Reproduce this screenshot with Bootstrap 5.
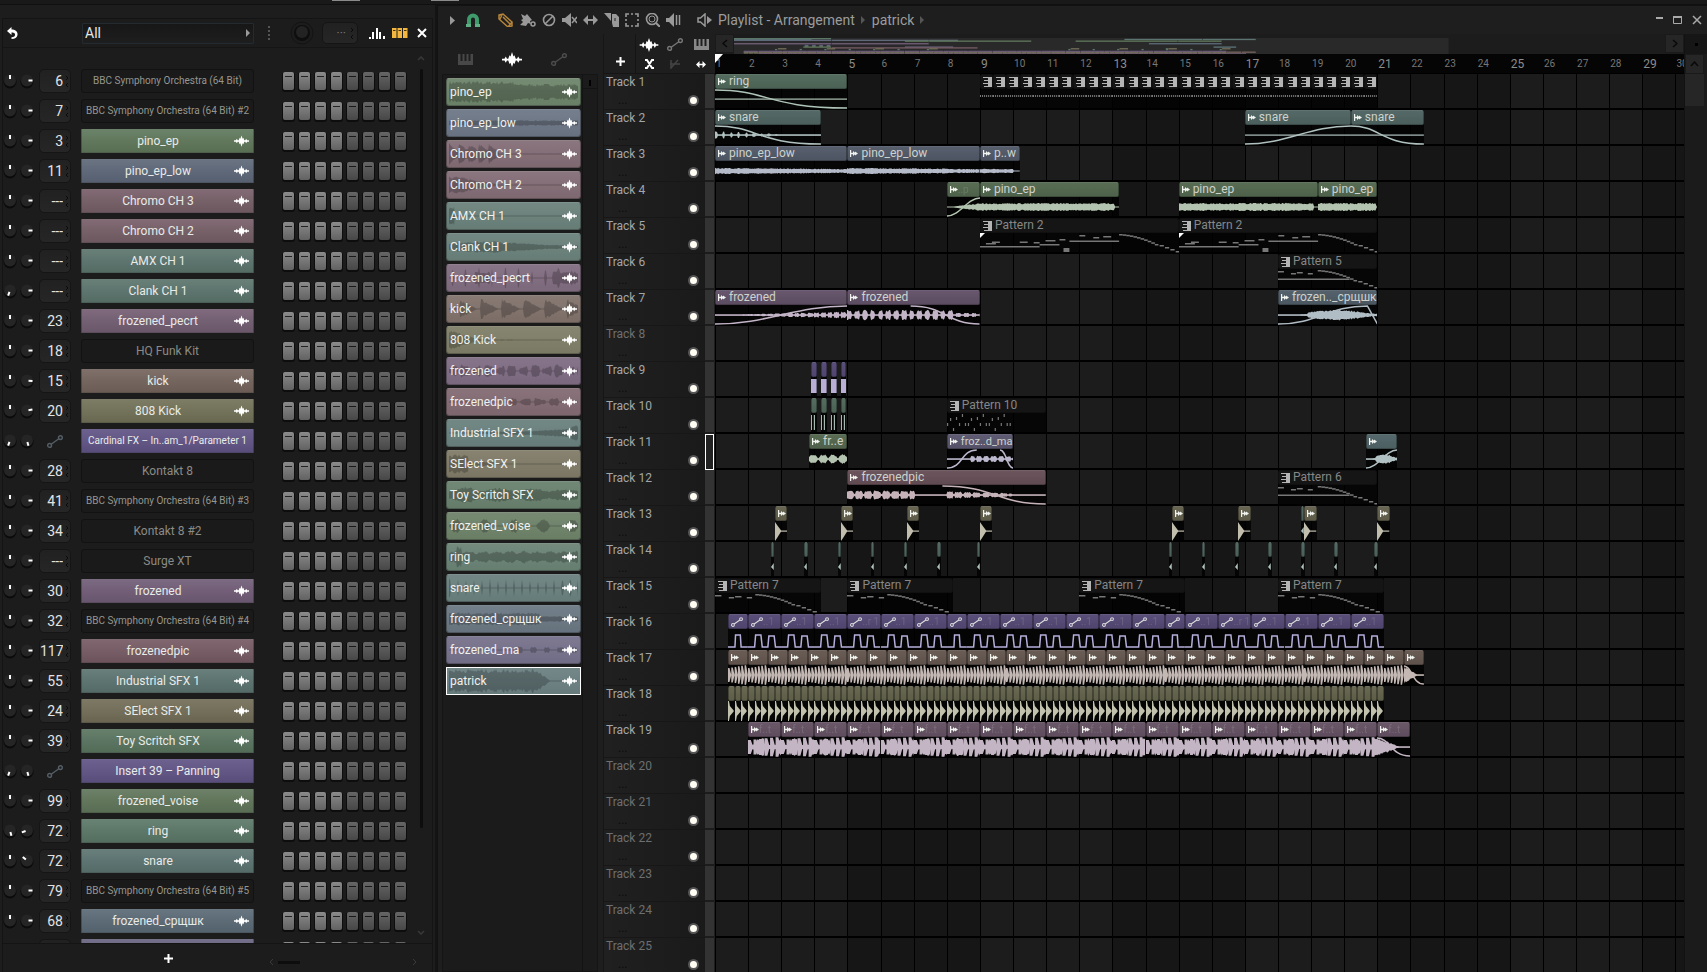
<!DOCTYPE html>
<html lang="en" data-bs-theme="dark">
<head>
<meta charset="utf-8">
<meta name="viewport" content="width=device-width, initial-scale=1">
<title>Playlist - Arrangement</title>
<link href="https://cdn.jsdelivr.net/npm/bootstrap@5.3.0/dist/css/bootstrap.min.css" rel="stylesheet">
<style>
:root{--ui:Roboto,"Noto Sans",sans-serif;--ink:#a3a6a8}
body{font-family:var(--ui);font-size:12px;line-height:16px;background:#1d1d1d;color:var(--ink)}
svg{display:block;flex:none}
button{background:none;border:0;padding:0;color:inherit;display:block;flex:none}
.topstrip{height:5px;background:#191919;border-bottom:1px solid #101010}
.topstrip i{height:1px;width:28px;background:#8a8a8a}
/* channel rack */
.rackwin{width:437px;border-right:2px solid #141414}
.rackin{margin:13px 2px 0 2px;border:1px solid #141414;border-width:1px 1px 0;background:#1c1c1c}
.rackhead{height:29px;border-bottom:1px solid #151515}
.filter{width:172px;height:21px;border:1px solid #232a30;background:linear-gradient(#171717,#1e1e1e);color:#e6e6e6;appearance:none;padding:0 2px;font-size:14px;line-height:17px;border-radius:1px}
.racklist{padding-top:18px}
.chrow{height:30px}
.knob{width:14px;height:16px}
.numbox{width:32px;height:24px;border:1px solid #151515;border-radius:5px;background:linear-gradient(#212121,#262626)}
.numbox input{width:25px;background:none;border:0;outline:0;color:#e3e3e3;font-size:14px;line-height:20px;padding:0 2px 0 0;text-align:right}
.chname{width:173px;height:24px;border-radius:1px;color:#e9ebe8;text-align:center;border:1px solid rgba(0,0,0,.25);border-top-color:rgba(255,255,255,.13);background-image:linear-gradient(rgba(255,255,255,.07),rgba(0,0,0,.08))}
.chname.plain{background:#1a1a1a;color:#8b8b86;border-color:#121212;border-radius:3px}
.chname.longer{font-size:10px}
.chname.longer.plain{color:#96968f}
.sw{width:11px;height:18px;border-radius:2px;background:linear-gradient(#222,#222) 50% 4px/7px 1px no-repeat,linear-gradient(#8b8b8b,#626262);box-shadow:0 1px 0 1px #0d0d0d}
.sw.off{background:linear-gradient(#181818,#181818) 50% 4px/7px 1px no-repeat,linear-gradient(#666,#474747)}
.thumb{width:3px;background:#0d0d0d;border-radius:2px}
.rackfoot{height:29px;border-top:1px solid #141414}
/* playlist window */
.plwin{border:1px solid #121212;border-width:1px 0 0 1px;background:#1e1e1e}
.titlebar{height:28px}
.titlebar .crumb{font-size:14px;line-height:20px;color:#9a9c9d}
.picker{width:165px}
.pickbox{border:1px solid #151515;background:#1b1b1b}
.picklist{width:141px}
.pick{width:135px;height:28px;border-radius:3px;border:1px solid rgba(0,0,0,.3);border-top-color:rgba(255,255,255,.16);color:#f1f1ee;text-align:left;background-image:linear-gradient(rgba(255,255,255,.06),rgba(0,0,0,.04));overflow:hidden}
.pick.sel{border:1px solid #fff;border-radius:0}
.pick .wv{position:absolute;inset:0}
.pickscroll{width:15px;background:#1b1b1b;border-left:1px solid #131313}
.heads{width:112px;border-left:1px solid #161616}
.tools{height:40px;border-bottom:1px solid #151515}
.thead-row{height:36px}
.thead-main{width:101px;background:linear-gradient(90deg,#202020,#1a1a1a);border-bottom:1px solid #171717}
.thead-row .strip{width:9px;background:#333;border-bottom:2px solid #1c1c1c}
.thead-row.dim .tname{color:#6d6f70}
.tname{line-height:16px}
.strip.on{outline:1px solid #fff;outline-offset:-1px;background:#222!important}
.led{width:11px;height:11px;border-radius:50%;background:#fffdf4;border:2px solid #555}
.more{color:#0c0c0c;line-height:8px}
.overview{height:20px;background:#1c1c1c}
.arr{width:19px;height:19px;background:#262626;border:1px solid #1a1a1a}
.ruler{height:19px;background:#050505;font-size:10px;color:#777}
.ruler span{position:absolute;top:2px;padding-left:1px}
.ruler .maj{font-size:12px;color:#8c8c8c}
.lane{height:36px;border-bottom:2px solid #000;background:repeating-linear-gradient(90deg,#000 0 1px,transparent 1px calc(100% / 29.26)),repeating-linear-gradient(90deg,#1c1c1c 0 13.67%,#161616 13.67% 27.34%)}
.clip{position:absolute;top:0;height:35px;background:rgba(0,0,0,.78);overflow:hidden}
.clip>svg{filter:saturate(1.6)}
.cliphead{height:15px;border-radius:2px;border:1px solid rgba(0,0,0,.3);border-top-color:rgba(255,255,255,.12);color:#ced2cc;white-space:nowrap;line-height:13px}
.clip.pat .cliphead{background:#151515;color:#858787;border-color:#101010}
.lbl{padding-left:3px}
.lbl.fit{font-size:11px}
.lbl.ghost{opacity:.18;font-size:10px;padding-left:0}
.vs{width:23px;background:#1b1b1b;border-left:1px solid #121212}
</style>
</head>
<body class="vh-100 overflow-hidden d-flex flex-column">
<svg width="0" height="0" class="position-absolute" aria-hidden="true">
 <symbol id="wave" viewBox="0 0 16 12"><path fill="currentColor" d="M0 5.300h2L3 3.500l1 1.800h1L6 2.500l.8 1L8 0l1.200 3.500.8-1 1 2.800h1L13 3.500l1 1.800h2v1.400h-2L13 8.500l-1-1.800h-1L10 9.500l-.8-1L8 12 6.800 8.500 6 9.500 5 6.700H4L3 8.500 2 6.700H0z"/></symbol>
 <symbol id="auto" viewBox="0 0 16 13"><g fill="none" stroke="currentColor" stroke-width="1.4"><circle cx="2.600" cy="10.400" r="1.900"/><circle cx="13.400" cy="2.600" r="1.900"/><path d="M4.200 9.200 11.800 3.800"/></g></symbol>
 <symbol id="keys" viewBox="0 0 15 11"><path fill="currentColor" d="M0 0h2.500v7h2V0h2v7h2V0h2v7h2V0H15v11H0z"/></symbol>
 <symbol id="clipi" viewBox="0 0 8 7"><path fill="#f0f3ee" d="M0 0h1.200v2.800H3V1l2 1.800V1.400L8 3.500 5 5.600V4.200L3 6V4.200H1.200V7H0z"/></symbol>
 <symbol id="pati" viewBox="0 0 9 10"><path fill="#b5b5b5" d="M5 0h4v10H5z"/><path stroke="#b5b5b5" d="M0 .5h5M1 3.500h4M0 6.500h5M1 9.500h4"/></symbol>
 <symbol id="arrows" viewBox="0 0 10 7"><path fill="currentColor" d="M0 3.500 3.500 0v2.700h3V0L10 3.500 6.500 7V4.300h-3V7z"/></symbol>
</svg>

<div class="topstrip d-flex flex-shrink-0" aria-hidden="true"><i style="margin-left:332px"></i><i style="margin-left:71px"></i></div>
<div class="d-flex flex-grow-1 overflow-hidden">
 <section class="rackwin d-flex flex-column flex-shrink-0" aria-label="Channel rack">
  <div class="rackin d-flex flex-column flex-grow-1 overflow-hidden">
   <div class="rackhead d-flex align-items-center flex-shrink-0">
    <button aria-label="Undo" class="ms-1"><svg width="11" height="12" viewBox="0 0 11 12"><path fill="#fff" d="M0 4 4.500 0v2.500C9 2.500 11 5 10.500 8 10 10.500 8 12 4.500 12v-1.800c2.500 0 3.700-1 3.600-2.600C8 6 6.500 5.500 4.500 5.500V8z"/></svg></button>
    <select class="filter" style="margin-left:64px" aria-label="Channel filter"><option>All</option></select>
    <svg style="margin-left:-8px;z-index:1" width="4" height="8"><path fill="#9a9a9a" d="M0 0 4 4 0 8z"/></svg>
    <svg style="margin-left:18px" width="2" height="14"><path stroke="#555" stroke-width="2" stroke-dasharray="2 2" d="M1 0v14"/></svg>
    <button aria-label="Swing" style="margin-left:20px"><svg width="24" height="24"><circle cx="12" cy="12" r="11" fill="none" stroke="#131313"/><circle cx="12" cy="12" r="8" fill="#0e0e0e"/><circle cx="12" cy="11" r="6" fill="#232323"/></svg></button>
    <div class="numbox d-flex align-items-center justify-content-end" style="width:36px;margin-left:8px;height:22px;color:#777;padding-right:3px"><span class="pe-1">···</span><svg width="4" height="13"><path fill="none" stroke="#0a0a0a" d="M1 1l2 2-2 2M3 8 1 10l2 2"/></svg></div>
    <button aria-label="Graph editor" style="margin-left:11px"><svg width="16" height="11"><path fill="#fff" d="M0 9h2v2H0zM3 4h2v7H3zM7 0h2v11H7zM10 4h2v7h-2zM14 8h2v3h-2z"/></svg></button>
    <button aria-label="Step editor" style="margin-left:7px"><svg width="16" height="10"><path fill="#f3b63f" d="M0 0h4.500v10H0zM5.500 0H10v10H5.500zM11 0h4.500v10H11z"/><path stroke="#453208" d="M1 2.500h2.500M6.500 2.500H9M12 2.500h2.500"/></svg></button>
    <button aria-label="Close rack" style="margin-left:9px"><svg width="10" height="10"><path stroke="#fff" stroke-width="2" d="M1 1l8 8M9 1 1 9"/></svg></button>
   </div>
   <div class="d-flex flex-grow-1 overflow-hidden">
    <div class="racklist flex-grow-1" id="rack"></div>
    <div class="d-flex flex-column align-items-center pt-2 pb-1" style="width:22px">
     <svg width="8" height="5"><path fill="none" stroke="#383838" stroke-width="1.500" d="M1 4 4 1l3 3"/></svg>
     <div class="thumb mt-2" style="height:86%"></div>
     <svg class="mt-auto mb-1" width="8" height="5"><path fill="none" stroke="#383838" stroke-width="1.500" d="M1 1l3 3 3-3"/></svg>
    </div>
   </div>
   <div class="rackfoot d-flex align-items-center flex-shrink-0">
    <button aria-label="Add channel" style="margin-left:161px"><svg width="9" height="9"><path stroke="#fff" stroke-width="2" d="M4.500 0v9M0 4.500h9"/></svg></button>
    <div class="d-flex align-items-center mt-2" style="margin-left:96px;width:148px"><svg width="5" height="8"><path fill="none" stroke="#3a3a3a" d="M4 1 1 4l3 3"/></svg><i class="ms-1" style="width:22px;height:3px;background:#0d0d0d"></i><svg class="ms-auto" width="5" height="8"><path fill="none" stroke="#3a3a3a" d="M1 1l3 3-3 3"/></svg></div>
   </div>
  </div>
 </section>

 <section class="plwin flex-grow-1 d-flex flex-column overflow-hidden" aria-label="Playlist">
  <header class="titlebar d-flex align-items-center flex-shrink-0">
   <svg style="margin-left:12px" width="5" height="9"><path fill="#999" d="M0 0 5 4.500 0 9z"/></svg>
   <button aria-label="Snap" style="margin-left:11px"><svg width="14" height="14" viewBox="0 0 14 14"><path fill="none" stroke="#3f9a6c" stroke-width="4" d="M3 11V6.500a4 4 0 0 1 8 0V11"/><path fill="#5fae84" d="M0 11h5v3H0zM9 11h5v3H9z"/></svg></button>
   <div class="d-flex align-items-center" style="margin-left:18px;gap:6px" id="toolset"></div>
   <svg style="margin-left:16px" width="15" height="14"><path fill="none" stroke="#999" stroke-width="1.500" d="M1 5h2.500L8 1v12L3.500 9H1z"/><path fill="#999" d="M10 3l5 4-5 4z"/></svg>
   <nav class="crumb d-flex align-items-center" style="padding-left:6px" aria-label="Arrangement">
    <span>Playlist - Arrangement</span>
    <svg style="margin:0 7px 0 6px" width="4" height="8"><path fill="#555" d="M0 0 4 4 0 8z"/></svg>
    <span>patrick</span>
    <svg style="margin-left:6px" width="4" height="8"><path fill="#555" d="M0 0 4 4 0 8z"/></svg>
   </nav>
   <div class="ms-auto d-flex align-items-center" style="gap:9px;margin-right:5px;color:#aaa">
    <button aria-label="Minimize"><svg width="8" height="8"><path fill="currentColor" d="M0 1h7v2H0z"/></svg></button>
    <button aria-label="Maximize"><svg width="10" height="9"><path fill="none" stroke="currentColor" d="M.5.5h8v7h-8z"/><path fill="currentColor" d="M0 0h9v2H0z"/></svg></button>
    <button aria-label="Close"><svg width="10" height="10"><path stroke="currentColor" stroke-width="1.500" d="M1 1l8 8M9 1 1 9"/></svg></button>
   </div>
  </header>
  <div class="d-flex flex-grow-1 overflow-hidden">
   <aside class="picker d-flex flex-column flex-shrink-0">
    <div class="d-flex align-items-center justify-content-between" style="height:40px;padding:11px 36px 0 20px">
     <button aria-label="Patterns" style="color:#484848"><svg width="15" height="11"><use href="#keys"/></svg></button>
     <button aria-label="Audio clips" style="color:#fff"><svg width="20" height="15"><use href="#wave"/></svg></button>
     <button aria-label="Automation clips" style="color:#4d4d4d"><svg width="16" height="13"><use href="#auto"/></svg></button>
    </div>
    <div class="pickbox d-flex flex-grow-1 ms-1" style="width:156px">
     <div class="picklist d-flex flex-column" style="gap:3px;padding:3px 0 0 3px" id="picks"></div>
     <div class="pickscroll"><div style="height:14px;border-bottom:1px solid #131313"><i class="d-block mx-auto" style="width:2px;height:11px;border-top:5px solid #1b1b1b;background:#000"></i></div></div>
    </div>
   </aside>
   <div class="heads flex-shrink-0 d-flex flex-column">
    <div class="tools d-flex flex-shrink-0">
     <button class="align-self-end" aria-label="Add track" style="margin:0 0 7px 12px"><svg width="9" height="9"><path stroke="#fff" stroke-width="2" d="M4.500 0v9M0 4.500h9"/></svg></button>
     <div class="d-grid align-items-center" style="grid-template-columns:repeat(3,26px);margin-left:10px;border-left:1px solid #151515;justify-items:center">
      <button aria-label="Audio" style="color:#fff"><svg width="20" height="14"><use href="#wave"/></svg></button>
      <button aria-label="Automation" style="color:#777"><svg width="16" height="13"><use href="#auto"/></svg></button>
      <button aria-label="Pattern" style="color:#888"><svg width="15" height="11"><use href="#keys"/></svg></button>
      <button aria-label="Clear" style="color:#fff"><svg width="9" height="10"><path stroke="currentColor" stroke-width="2" d="M0 1h2l5 8h2M0 9h2l5-8h2" fill="none"/></svg></button>
      <button aria-label="Fade" style="color:#444"><svg width="10" height="10"><path fill="none" stroke="currentColor" stroke-width="1.500" d="M1 1v8l7-8M0 5h10"/></svg></button>
      <button aria-label="Stretch" style="color:#fff"><svg width="10" height="7"><use href="#arrows"/></svg></button>
     </div>
    </div>
    <div id="heads"></div>
   </div>
   <div class="flex-grow-1 d-flex flex-column overflow-hidden" id="timeline">
    <div class="overview d-flex flex-shrink-0"><button class="arr" aria-label="Scroll left"><svg class="mx-auto" width="6" height="9"><path fill="none" stroke="#090909" stroke-width="1.500" d="M5 1 1 4.500 5 8"/></svg></button>
     <div class="flex-grow-1 pt-1"><svg id="ov" width="100%" height="16" viewBox="0 0 929 18" preserveAspectRatio="none"></svg></div>
     <button class="arr" aria-label="Scroll right"><svg class="mx-auto" width="6" height="9"><path fill="none" stroke="#090909" stroke-width="1.500" d="M1 1l4 3.500L1 8"/></svg></button></div>
    <div class="ruler position-relative overflow-hidden flex-shrink-0" id="ruler"></div>
    <div id="lanes" style="border-top:1px solid #000"></div>
   </div>
   <div class="vs flex-shrink-0 d-flex flex-column">
    <div style="height:20px;background:#161616" class="d-flex align-items-center justify-content-center"><i style="width:3px;height:3px;background:#000"></i></div>
    <button class="arr" aria-label="Scroll up" style="height:20px"><svg class="mx-auto" width="9" height="6"><path fill="none" stroke="#090909" stroke-width="1.500" d="M1 5 4.500 1 8 5"/></svg></button>
    <div style="height:32px;width:19px;background:#262626"></div>
   </div>
  </div>
 </section>
</div>

<script>
const C={ep:'#5f785b',low:'#5e6879',chr:'#775f68',amx:'#5b756d',pec:'#745e73',kick:'#74645c',k808:'#727259',auto:'#615487',frz:'#715d77',pic:'#765b64',ind:'#5b7470',sel:'#726e58',toy:'#5a7560',voi:'#60765a',ring:'#5b7767',snr:'#5b7471',csh:'#5b6a76',ma:'#686380',pat:'#5c7376'};
const svg=(w,h,inner,extra='')=>`<svg width="${w}" height="${h}" ${extra}>${inner}</svg>`;
let seed=7;const rnd=()=>(seed=(seed*16807)%2147483647)/2147483647;

/* channel rack rows: number, name, colour, left knob angle, right knob angle */
const B='BBC Symphony Orchestra (64 Bit)';
const rack=[['6',B],['7',B+' #2'],['3','pino_ep','ep'],['11','pino_ep_low','low'],['---','Chromo CH 3','chr'],['---','Chromo CH 2','chr'],['---','AMX CH 1','amx'],['---','Clank CH 1','amx',200],['23','frozened_pecrt','pec'],['18','HQ Funk Kit'],['15','kick','kick',0,95],['20','808 Kick','k808',0,80],['~','Cardinal FX – In..am_1/Parameter 1','auto',200,165],['28','Kontakt 8'],['41',B+' #3'],['34','Kontakt 8 #2'],['---','Surge XT'],['30','frozened','frz'],['32',B+' #4'],['117','frozenedpic','pic'],['55','Industrial SFX 1','ind'],['24','SElect SFX 1','sel'],['39','Toy Scritch SFX','toy'],['~','Insert 39 – Panning','auto',200,165],['99','frozened_voise','voi'],['72','ring','ring',165,250],['72','snare','snr',0,310],['79',B+' #5'],['68','frozened_срщшк','csh'],['','','ma']];
const knob=(a,l)=>`<button class="knob" aria-label="${l}">${svg(14,16,`<circle cx="7" cy="9" r="6.500" fill="#0b0b0b"/><circle cx="7" cy="7.500" r="6" fill="#252525"/><path d="M7 6V2" stroke="#fff" stroke-width="2" transform="rotate(${a} 7 7.500)"/>`)}</button>`;
document.getElementById('rack').innerHTML=rack.map(([n,t,c,a=0,b=90])=>{
 const num=n==='~'?`<div style="width:32px;color:#555e66">${svg(16,13,'<use href="#auto"/>','class="mx-auto"')}</div>`:
  `<div class="numbox d-flex align-items-center"><input value="${n}" aria-label="Mixer track of ${t||'channel'}">${svg(4,13,'<path fill="none" stroke="#0a0a0a" d="M1 1l2 2-2 2M3 8 1 10l2 2"/>')}</div>`;
 const icon=c&&c!=='auto'?`<svg class="me-1" width="15" height="12" style="color:#fff"><use href="#wave"/></svg>`:'';
 return `<div class="chrow d-flex align-items-center">${knob(a,'Panning')}<span style="width:3px"></span>${knob(b,'Volume')}
 <span style="width:5px"></span>${num}<span style="width:10px"></span><button aria-label="${t||'Channel'}" class="chname d-flex align-items-center ${c?'':'plain'} ${t.length>24?'longer':''}" ${c?`style="background-color:${C[c]}"`:''}><span class="flex-grow-1 text-nowrap">${t}</span>${icon}</button>
 <span style="width:29px"></span><div class="d-flex" style="gap:5px">${[0,1,2,3,4,5,6,7].map(i=>`<button class="sw ${i>3?'off':''}" aria-label="Step ${i+1}"></button>`).join('')}</div></div>`}).join('');

/* toolbar glyphs */
const T=[['Draw',16,'<path fill="none" stroke="#b5843a" stroke-width="1.500" d="M1 2l4-1 9 8-4 5-9-8zM4 2l-2 4M5 4l7 7M10 14l4-1V9"/>'],
['Paint',16,'<path fill="#999" d="M1 1l4 2 2-2 5 6-2 1 1 3-3-1-2 3-6-1 3-3-2-2 2-1z"/><circle cx="13" cy="11" r="2" fill="none" stroke="#999" stroke-width="1.500"/>'],
['Delete',14,'<circle cx="7" cy="7" r="5.500" fill="none" stroke="#999" stroke-width="1.600"/><path stroke="#999" stroke-width="1.600" d="M3 11l8-8"/>'],
['Mute',15,'<path fill="#999" d="M0 5h3l6-5v14L3 9H0z"/><path stroke="#999" stroke-width="1.500" d="M10 4l5 6M15 4l-5 6"/>'],
['Slip',15,'<path fill="#999" d="M0 7l5-5v4h5V2l5 5-5 5V8H5v4z"/>'],
['Slice',15,'<path fill="#999" d="M0 0h7v8zM8 1h4l3 3v10H9L8 10z"/><path stroke="#222" d="M11 5v3"/>'],
['Select',14,'<path fill="none" stroke="#999" stroke-width="1.600" d="M1 4V1h3M10 1h3v3M13 10v3h-3M4 13H1v-3M6 1h2M6 13h2M1 6v2M13 6v2"/>'],
['Zoom',15,'<circle cx="7" cy="6" r="5.500" fill="none" stroke="#999" stroke-width="1.600"/><circle cx="7" cy="6" r="3" fill="none" stroke="#999"/><path stroke="#999" stroke-width="2" d="M11 10l4 4"/>'],
['Playback',15,'<path fill="#999" d="M0 5h3l5-5v14L3 9H0z"/><path stroke="#999" stroke-width="1.500" d="M10.500 2v10M13.500 2v10"/>']];
document.getElementById('toolset').innerHTML=T.map(([l,w,p])=>`<button aria-label="${l}">${svg(w,14,p)}</button>`).join('');

/* mirrored waveform polygon; env(t) gives the amplitude 0..1 */
function wavePath(W,mid,amp,env,step=1){let up='',dn='';
 for(let x=0;x<=W;x+=step){const a=Math.max(.4,amp*env(x/W)*(.65+.35*rnd()));up+=`L${x} ${(mid-a).toFixed(1)}`;dn=`L${x} ${(mid+a).toFixed(1)}`+dn}
 return `M0 ${mid}${up}${dn}z`}
const burst=n=>t=>{const p=(t*n)%1;return p<.7?.4+.6*Math.abs(Math.sin(t*17)):0.05};
const saw=n=>t=>Math.max(0,1-((t*n)%1)*1.150);
const E={ep:t=>t<.5?1:.75,low:t=>.25,c3:t=>t<.38?.4+.6*saw(5)(t*2.6):.03+.15*Math.max(0,.6-t),c2:t=>Math.max(.03,.95-2.300*t),amx:t=>t<.04?.9:.02,clank:t=>.15+.4*Math.exp(-Math.pow((t-.3)*3,2)),pec:t=>Math.sin(t*61)>.93?1:t>.2&&t<.32||t>.8?.6:.04,kick:t=>t<.08?.1:saw(6)(t+.09),k808:t=>t<.2?1-4*t:.12*(1-t),frz:t=>.6*burst(11)(t),pic:t=>t>.48&&t<.85?burst(9)(t)*.4:.06,ind:t=>.08+.35*t*t+(t>.95?.4:0),sel:t=>t<.15?.9:t<.35?.2:.03,toy:t=>.35+.4*Math.abs(Math.sin(t*12))*(1-t*.5),voi:t=>Math.max(.03,.7*Math.sin(t*28)),ring:t=>t>.06&&t<.1?1:.35+.25*Math.abs(Math.sin(t*30)),snr:t=>(t*16)%1<.14?.9:.05,csh:t=>t<.7?.6:.25,ma:t=>t>.5&&Math.sin(t*60)>.3?.3:.06,pat:t=>t<.68?1.100:Math.max(.03,1.100-10*(t-.68))};
const picks=[['pino_ep','ep','ep'],['pino_ep_low','low','low'],['Chromo CH 3','chr','c3'],['Chromo CH 2','chr','c2'],['AMX CH 1','amx','amx'],['Clank CH 1','amx','clank'],['frozened_pecrt','pec','pec'],['kick','kick','kick'],['808 Kick','k808','k808'],['frozened','frz','frz'],['frozenedpic','pic','pic'],['Industrial SFX 1','ind','ind'],['SElect SFX 1','sel','sel'],['Toy Scritch SFX','toy','toy'],['frozened_voise','voi','voi'],['ring','ring','ring'],['snare','snr','snr'],['frozened_срщшк','csh','csh'],['frozened_ma','ma','ma'],['patrick','pat','pat']];
document.getElementById('picks').innerHTML=picks.map(([t,c,e],i)=>`<button class="pick position-relative d-flex align-items-center ${i==19?'sel':''}" style="background-color:color-mix(in srgb,${C[c]},#fff 9%)">${svg(133,26,`<path fill="rgba(0,0,0,.22)" transform="translate(2 0)" d="${wavePath(129,13,11,E[e])}"/>`,'class="wv"')}<span class="position-relative flex-grow-1" style="padding-left:3px">${t}</span><svg class="position-relative" style="margin-right:3px;color:#fff" width="15" height="12"><use href="#wave"/></svg></button>`).join('');

/* track headers */
document.getElementById('heads').innerHTML=Array.from({length:25},(_,i)=>{const n=i+1;
 return `<div class="thead-row d-flex ${n==8||n>19?'dim':''}"><div class="thead-main d-flex justify-content-between" style="padding:0 6px 0 2px"><div class="d-flex flex-column"><span class="tname">Track ${n}</span><span class="more" style="margin:6px 0 0 12px">...</span></div><button class="led" aria-label="Mute track ${n}" style="margin-top:21px"></button></div><div class="strip ${n==11?'on':''}"></div></div>`}).join('');

/* ruler */
const BARS=29.26,pc=v=>(v/BARS*100).toFixed(3)+'%';
document.getElementById('ruler').innerHTML=Array.from({length:30},(_,i)=>`<span class="${i%4==0&&i?'maj':''}" style="left:${pc(i)}">${i+1}</span>`).join('')+'<svg class="position-absolute top-0 start-0" width="8" height="10"><path fill="#fff" d="M0 0h8L0 9z"/></svg>';

/* clips: [start, end, label, colour, body kind, fades, label style] */
const L=Array.from({length:25},()=>[]);
const add=(t,...c)=>L[t-1].push(c);
const light=c=>`color-mix(in srgb,${C[c]||'#888'},#fff 55%)`;
const S='<path fill="none" stroke-width="1.500" vector-effect="non-scaling-stroke" ';
add(1,0,4,'ring','ring','flat','out');for(let i=0;i<30;i++)add(1,8+i*.4,8.4+i*.4,'',null,'dash');
add(2,0,3.2,'snare','snr','hits','out');add(2,16,19.2,'snare','snr','flat','in');add(2,19.2,21.4,'snare','snr','flat','out');
add(3,0,4,'pino_ep_low','low','lowwave');add(3,4,8,'pino_ep_low','low','lowwave');add(3,8,9.2,'p..w','low','thin');
add(4,7,8,'..p','ep','rise','in','ghost');add(4,8,12.2,'pino_ep','ep','full');add(4,14,18.2,'pino_ep','ep','full');add(4,18.2,20,'pino_ep','ep','full');
add(5,8,14,'Pattern 2',null,'notes2');add(5,14,20,'Pattern 2',null,'notes2');
add(6,17,20,'Pattern 5',null,'notes5');
add(7,0,4,'frozened','frz','grow','in');add(7,4,8,'frozened','frz','burst','outh');add(7,17,20,'frozen.._срщшк','csh','swell','in2');
for(let i=0;i<4;i++){add(9,2.9+i*.3,3.07+i*.3,'','auto','block');add(10,2.9+i*.3,3.07+i*.3,'','ring','sticks')}
add(10,7,10,'Pattern 10',null,'dots');
add(11,2.84,4,'fr..e','voi','blobs');add(11,7,9,'froz..d_ma','ma','burst2','both','fit');add(11,19.65,20.6,'','pat','swell','in');
add(12,4,10,'frozenedpic','pic','pic','outh');add(12,17,20,'Pattern 6',null,'notes5');
[1.8,3.8,5.8,8,13.8,15.8,17.8,20].forEach(s=>add(13,s,s+.37,'','sel','hit'));add(13,17.69,17.8,'','amx','tick');
[1.68,2.69,3.7,4.7,5.7,6.7,7.9,13.7,14.7,15.7,16.7,17.7,18.7,19.9].forEach(s=>add(14,s,s+.11,'','amx','tick'));
[0,4,11,17].forEach(s=>add(15,s,s+3.2,'Pattern 7',null,'notes7'));
[.4,1,2,3,4,5,6,7,7.6,8.6,9.6,10.6,11.6,12.6,13.6,14.2,15.2,16.2,17.2,18.2,19.2,20.2].forEach((s,i,a)=>{if(a[i+1])add(16,s,a[i+1],a[i+1]-s>.8?(i==4||i==16?'..r 1':'..1'):'','auto','steps','','ghost')});
for(let i=0;i<35;i++)add(17,.4+i*.6,1+i*.6,'','kick',i<34?'dense':'decay',i<34?'':'out');
for(let i=0;i<99;i++)add(18,.4+i*.2,.6+i*.2,'','k808','hit2');
for(let i=1;i<21;i++)add(19,i,i+1,'f..t','pec',i<20?'dense2':'decay',i<20?'':'out','ghost');

function body(k,W){
 const w=(env,amp=8,st=1)=>`<path d="${wavePath(W,10,amp,env,st)}"/>`, r=(x,y,l,h=1.500)=>`<rect x="${(x*W).toFixed(1)}" y="${y}" width="${(l*W).toFixed(1)}" height="${h}"/>`;
 const line='<rect y="9.500" width="100%" height="1.200"/>';
 /* a run of narrow hits that grow towards the end of the clip */
 const comb=(n,top,foot)=>{let d='';for(let i=0;i<n;i++){const q=W/n,x=i*q,h=7+2.800*i/(n-1),a=q*foot,b=q*top;d+=`M${x.toFixed(1)} ${10-h}h${b.toFixed(1)}L${(x+a).toFixed(1)} 10L${(x+b).toFixed(1)} ${10+h}H${x.toFixed(1)}z`}return `<path d="${d}"/>`};
 const tail=(o,f)=>{let s='';for(let i=0;i<11;i++)s+=r(o+i*f*.6/10,1+i*1.100*(i/11+.3)*.75,f*.06);for(let i=0;i<4;i++)s+=r(o+f*(.68+i*.09),12+i*2,f*.07);return s};
 switch(k){
 case'flat':return line;
 case'dash':return`<path stroke="#777" stroke-width="2" stroke-dasharray="1 1" d="M0 7h${W}"/>`;
 case'hits':return line+w(t=>t<.7&&(t*14)%1<.3?.55*(1-t*1.300):0);
 case'lowwave':return w(t=>.42-.15*t);case'thin':return w(t=>t<.85?.28:.03);
 case'rise':return w(t=>.5*t);case'full':return w(t=>t>.97?.05:.52);
 case'grow':return line+w(t=>(t>.2&&(t*20)%1<.7)?.45*t:.04);
 case'burst':return line+w(t=>(t*17)%1<.6?.55*(t<.8?1:.3)+.1:.05);
 case'burst2':return line+w(t=>t>.35&&(t*9)%1<.7?.4:.05);
 case'swell':return line+w(t=>t>.15?.7*Math.pow(Math.sin(Math.min(1,t*1.050)*2.600),2)*(t>.3?1:.4):.05);
 case'pic':return line+w(t=>(t<.34?.55:t>.5&&t<.83?.9-t*.8:0.02)*((t*22)%1<.75?1:.3));
 case'block':return`<rect y="2" width="${W}" height="14"/>`;
 case'sticks':return`<path d="M0 2h1v15H0zM3 2h1.200v15H3z"/>`;
 case'blobs':return line+w(t=>.65*Math.pow(Math.abs(Math.sin((t+.02)*12.200)),.7));
 case'hit':return line+`<path d="M0 1 2 4 6 9.500v1L2 17 0 20z"/>`;
 case'hit2':return`<path d="M0 0h1l1 5 4 4.500v1L2 15l-1 5H0z"/>`;
 case'tick':return`<path d="M3 6v7L0 10z"/>`;
 case'steps':return W<25?`${S}stroke="#b5b0cc" d="M0 18h${W*.35}L${W*.38} 6h${W*.24}l${W*.04} 12H${W}"/>`:`${S}stroke="#b5b0cc" d="M0 18h${W*.2}L${W*.23} 6h${W*.16}l${W*.04} 12h${W*.17}L${W*.63} 7h${W*.16}l${W*.04} 11H${W}"/>`;
 case'dense':return comb(6,.45,1);
 case'dense2':return comb(6,.5,.95)+w(t=>t>.25&&t<.5||t>.85?1:.3,9);
 case'decay':return line+w(t=>Math.max(.03,1-t*1.400),10);
 case'dots':{let s='';for(let i=0;i<22;i++)s+=`<rect x="${(i*W*.66/22).toFixed(1)}" y="${[10,4,10,15,1,5,10][(i*5)%7]}" width="1.200" height="3"/>`;return s}
 case'notes7':return r(0,2,.06)+r(.13,4,.05)+r(.19,3,.06)+r(.3,4,.05)+tail(.38,.57);
 case'notes5':return r(0,2,.06)+r(.13,4,.05)+r(.19,3,.06)+r(.3,4,.05)+r(0,9.500,.72)+tail(.4,.6);
 case'notes2':return r(0,13,.3)+r(.03,10,.05)+r(.06,8.500,.04)+r(.2,8.500,.04)+r(.27,9,.03)+r(.3,11,.1)+r(.33,7,.05)+r(.4,6,.03)+r(.42,15,.03,4)+r(.45,7.500,.25)+r(.5,2,.03)+r(.57,4,.03)+r(.62,3,.04)+tail(.7,.3)+'<path fill="#fff" d="M0 0h5L0 5z"/>';
 }return''}
const fades={in:W=>`M0 19C${W*.4} 19 ${W*.6} 1 ${W} 1`,out:W=>`M0 1C${W*.4} 1 ${W*.4} 19 ${W} 19`,outh:W=>`M${W*.48} 1C${W*.75} 1 ${W*.75} 19 ${W} 19`,in2:W=>`M0 19C${W*.4} 19 ${W*.5} 1 ${W*.9} 1L${W} 19`,both:W=>`M0 19C${W*.25} 19 ${W*.2} 1 ${W*.45} 1M${W*.8} 1C${W*.9} 1 ${W*.9} 19 ${W} 19`};
document.getElementById('lanes').innerHTML=L.map(cs=>`<div class="lane position-relative">${cs.map(([s,e,t,c,k,f,g])=>{
 const W=Math.round((e-s)*33),col=c?light(c):'#777';
 const icon=W<10?'':c==='auto'?svg(12,10,'<use href="#auto"/>','style="color:#ddd"'):k==='dash'||!c?svg(9,10,'<use href="#pati"/>'):svg(8,7,'<use href="#clipi"/>');
 return `<div class="clip ${c?'':'pat'}" style="left:${pc(s)};width:${pc(e-s)}"><div class="cliphead d-flex align-items-center" ${c?`style="background:linear-gradient(rgba(255,255,255,.03),rgba(0,0,0,.06)) color-mix(in srgb,${C[c]},#000 13%)"`:''}><span style="width:2px" class="flex-shrink-0"></span>${icon}${t?`<span class="lbl ${g||''}">${t}</span>`:''}</div><svg width="100%" height="20" viewBox="0 0 ${W} 20" preserveAspectRatio="none" style="fill:${col};stroke:none">${body(k,W)}${f?S+`stroke="${col}" d="${fades[f](W)}"/>`:''}</svg></div>`}).join('')}</div>`).join('');

/* overview map */
let o='<rect width="713" height="18" fill="#292929"/>';
L.forEach((cs,i)=>cs.forEach(([s,e,t,c])=>{if(c)o+=`<rect x="${(s*24.350).toFixed(1)}" y="${(i*.95).toFixed(1)}" width="${Math.max(2,(e-s)*24.350-.5).toFixed(1)}" height="1.500" fill="${C[c]}"/>`}));
document.getElementById('ov').innerHTML=o;
</script>
<script src="https://cdn.jsdelivr.net/npm/bootstrap@5.3.0/dist/js/bootstrap.bundle.min.js"></script>
</body>
</html>
